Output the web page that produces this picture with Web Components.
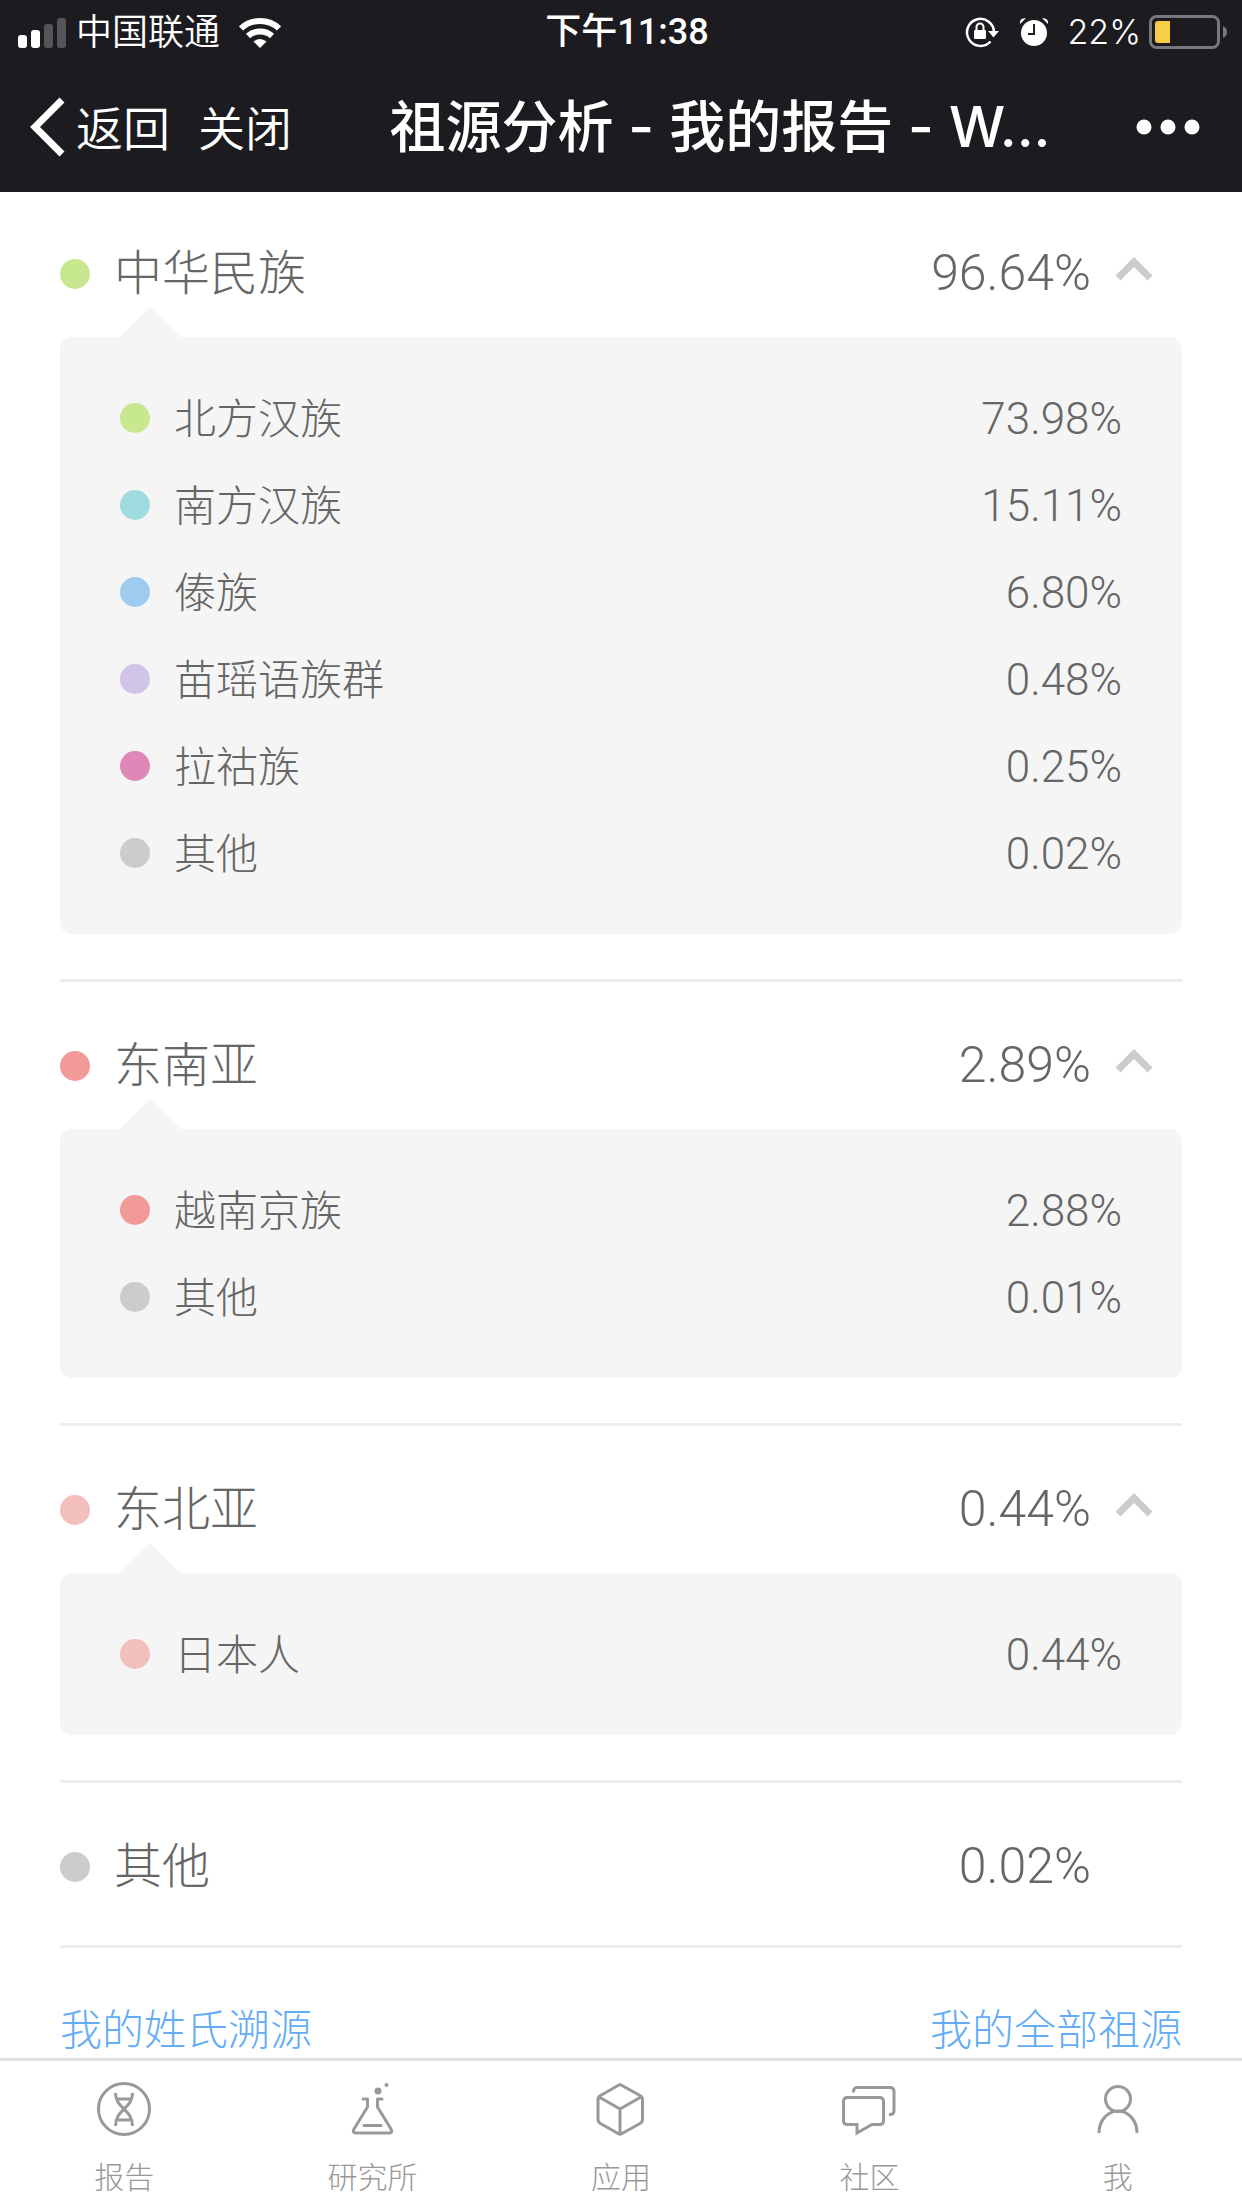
<!DOCTYPE html>
<html lang="zh-CN">
<head>
<meta charset="utf-8">
<title>祖源分析 - 我的报告</title>
<style>
html,body{margin:0;background:#fff}
body{font-family:Inter,"Noto Sans CJK SC",sans-serif;font-weight:300;color:#666}
</style>
</head>
<body>
<ancestry-app></ancestry-app>
<script>
const define=(name,html,extra)=>{
  const t=document.createElement('template');
  t.innerHTML=html;
  customElements.define(name,class extends HTMLElement{
    connectedCallback(){
      if(this.shadowRoot)return;
      this.attachShadow({mode:'open'}).append(t.content.cloneNode(true));
      if(extra)extra(this,this.shadowRoot);
    }
  });
};

define('status-bar',`<style>
:host{display:grid;grid-template-columns:1fr auto 1fr;align-items:center;height:64px;padding:0 14px 0 18px;font:350 36px/48px Inter,"Noto Sans CJK SC",sans-serif}
div{display:flex;align-items:center}
svg{display:block;flex:none}
.l{gap:9px}.l .wifi{margin-left:10px}
.t{padding-left:8px;font-weight:500;font-family:Roboto,"Noto Sans CJK SC",sans-serif}
.r{justify-content:flex-end;gap:8px}
.r .alarm{margin:0 10px}
.r span{font-size:34px}
</style>
<div class="l"><svg width="49" height="32" viewBox="0 0 49 32" fill="#fff"><rect y="19" width="9" height="13" rx="3"/><rect x="13" y="14" width="9" height="18" rx="3"/><g fill="#555459"><rect x="26" y="8" width="9" height="24" rx="3"/><rect x="39" y="2" width="9" height="30" rx="3"/></g></svg><span>中国联通</span>
<svg class="wifi" width="42" height="32" viewBox="0 0 42 32" fill="none" stroke="#fff" stroke-width="6"><path d="M2 12.500C12 2.500 30 2.500 40 12.500M9 20C15.500 14 26.500 14 33 20"/><path fill="#fff" stroke="none" d="M21 32l-6.500-6.500q6.500-5 13 0z"/></svg></div>
<span class="t">下午11:38</span>
<div class="r"><svg width="36" height="32" viewBox="0 0 36 32" fill="none" stroke="#fff" stroke-width="2.500"><path d="M25.500 25.500A13.500 13.500 0 1 1 29 16"/><path d="M23 15h11l-5.500 6.500z" fill="#fff" stroke="none"/><rect x="9" y="14" width="12" height="9" rx="1" fill="#fff" stroke="none"/><path d="M11.500 14v-3a3.500 3.500 0 0 1 7 0v3" stroke-width="2"/></svg>
<svg class="alarm" width="30" height="32" viewBox="0 0 30 32" fill="#fff"><circle cx="15" cy="17" r="13"/><path d="M1 8Q0 2 7 2zM29 8Q30 2 23 2z"/><path d="M15 8v10H9" fill="none" stroke="#1c1b20" stroke-width="2"/></svg>
<span>22%</span>
<svg width="79" height="34" viewBox="0 0 79 34"><rect x="1.500" y="1.500" width="68" height="31" rx="6" fill="none" stroke="#78777b" stroke-width="3"/><path d="M9 6h12v22H9q-3 0-3-3V9q0-3 3-3z" fill="#f8ce46"/><path d="M74 11q4 2 4 6t-4 6z" fill="#78777b"/></svg></div>`);

define('nav-bar',`<style>
:host{display:flex;align-items:center;height:128px;padding:0 42px 2px 30px;box-sizing:border-box;font:350 47px/72px Inter,"Noto Sans CJK SC",sans-serif}
button{all:unset;display:flex;align-items:center;cursor:pointer}
button svg{display:block}
button span{padding-top:4px}
.close{margin-left:28px}
h1{flex:1;min-width:0;margin:0;padding-left:12px;text-align:center;font:500 56px/72px Inter,"Noto Sans CJK SC",sans-serif;white-space:nowrap}
</style>
<button><svg width="46" height="60" viewBox="0 0 46 60" fill="none" stroke="#fff" stroke-width="7"><path d="M32 3L5 30l27 27"/></svg><span>返回</span></button>
<button class="close"><span>关闭</span></button>
<h1><slot></slot></h1>
<button aria-label="更多"><svg width="64" height="18" viewBox="0 0 64 18" fill="#fff"><circle cx="8" cy="9" r="7.500"/><circle cx="32" cy="9" r="7.500"/><circle cx="56" cy="9" r="7.500"/></svg></button>`);

define('color-dot',`<style>:host{display:block;flex:none;width:30px;height:30px;border-radius:50%;background:var(--dot)}</style>`);

define('region-item',`<style>
:host{display:flex;align-items:center;gap:24px;height:87px;font-size:42px;line-height:60px}
span{padding-top:2px}
.v{margin-left:auto;font-size:44px;font-family:Roboto,sans-serif}
</style><color-dot></color-dot><span><slot></slot></span><span class="v"></span>`,
 (h,r)=>{r.querySelector('color-dot').style.setProperty('--dot',h.getAttribute('color'));r.querySelector('.v').textContent=h.getAttribute('value')});

define('region-group',`<style>
:host{display:block;border-bottom:3px solid #eaeef2}
.head{all:unset;box-sizing:border-box;display:flex;align-items:center;width:100%;height:147px;padding:21px 30px 0 0;font-size:48px;line-height:72px;cursor:pointer}
.name{margin-left:24px;padding-bottom:2px}
.v{margin-left:auto;padding-bottom:2px;font-size:50px;font-family:Roboto,sans-serif}
svg{display:block;flex:none;width:36px;height:24px;margin:0 0 10px 25px}
.panel{position:relative;margin-bottom:45px;padding:37px 60px 38px;border-radius:12px;background:#f5f5f5}
.panel::before{content:"";position:absolute;left:60px;top:-30px;border:30px solid transparent;border-top:0;border-bottom-color:#f5f5f5}
:host([plain]) .panel,:host([plain]) path{display:none}
:host([plain]) .head{height:162px;padding-top:6px}
</style>
<button class="head"><color-dot></color-dot><span class="name"></span><span class="v"></span><svg viewBox="0 0 36 24" fill="none" stroke="#ccc" stroke-width="7"><path d="M2 21L18 5l16 16"/></svg></button>
<div class="panel"><slot></slot></div>`,
 (h,r)=>{r.querySelector('color-dot').style.setProperty('--dot',h.getAttribute('color'));r.querySelector('.name').textContent=h.getAttribute('name');r.querySelector('.v').textContent=h.getAttribute('value');if(!h.hasAttribute('plain'))r.querySelector('button').setAttribute('aria-expanded','true')});

define('tab-item',`<style>
:host{display:block;flex:1}
a{display:flex;flex-direction:column;align-items:center;gap:17px;padding-top:18px;color:#999;text-decoration:none;font-size:30px;line-height:42px}
</style><a href="#"><slot name="icon"></slot><span><slot></slot></span></a>`);

define('tab-bar',`<style>
:host{display:flex;flex:none;height:147px;border-top:3px solid #dfe3e6;background:#fff}
svg{display:block;width:60px;height:60px;fill:none;stroke:#999;stroke-width:3}
</style>
<tab-item><svg slot="icon" viewBox="0 0 60 60"><circle cx="30" cy="30" r="25.500"/><path d="M21.500 14c0 16 17 16 17 33M38.500 14c0 16-17 16-17 33M22 20h16M24 41h12"/></svg>报告</tab-item>
<tab-item><svg slot="icon" viewBox="0 0 60 60" stroke-linecap="round" stroke-linejoin="round"><path d="M20 20h4.500v8L11 50q-2 4 2 4h33q4 0 2-4L34.500 28v-8H39M21 46.500h17"/><g fill="#999" stroke="none"><circle cx="35" cy="12" r="3.500"/><circle cx="43.500" cy="6" r="2"/></g></svg>研究所</tab-item>
<tab-item><svg slot="icon" viewBox="0 0 60 60" stroke-linejoin="round"><path d="M27 6.500q2-1.500 4 0L49 16.500q2.500 1.500 2.500 4v20q0 2.500-2.500 4L31 54.500q-2 1.500-4 0L9.500 44.500Q7 43 7 40.500v-20q0-2.500 2.500-4zM8 18l21 12 21-12M29 30v25"/></svg>应用</tab-item>
<tab-item><svg slot="icon" viewBox="0 0 60 60"><path d="M8.500 18.500h32q4 0 4 4v19q0 4-4 4H33L18 54v-8.500H8.500q-4 0-4-4v-19q0-4 4-4zM14.500 13.500v-1q0-4 4-4H51q4 0 4 4v19q0 4-4 4h-1"/></svg>社区</tab-item>
<tab-item><svg slot="icon" viewBox="0 0 60 60"><circle cx="30" cy="20" r="12.500"/><path d="M11 54c0-13 9-22 19-22s19 9 19 22"/></svg>我</tab-item>`);

define('ancestry-app',`<style>
:host{display:flex;flex-direction:column;height:100vh;overflow:hidden}
header{flex:none;z-index:1;background:#1c1b20;color:#fff}
main{flex:1;min-height:0;overflow:hidden;margin-top:-2px;padding:0 60px}
.links{display:flex;justify-content:space-between;padding-top:52px;font-size:42px;line-height:60px}
.links a{color:#64adf5;text-decoration:none}
</style>
<header><status-bar></status-bar><nav-bar>祖源分析 - 我的报告 - W...</nav-bar></header>
<main>
<region-group name="中华民族" value="96.64%" color="#c8e88f">
<region-item color="#c8e88f" value="73.98%">北方汉族</region-item>
<region-item color="#a0dcdf" value="15.11%">南方汉族</region-item>
<region-item color="#9fcbef" value="6.80%">傣族</region-item>
<region-item color="#d0c4e8" value="0.48%">苗瑶语族群</region-item>
<region-item color="#df87b6" value="0.25%">拉祜族</region-item>
<region-item color="#cccccc" value="0.02%">其他</region-item>
</region-group>
<region-group name="东南亚" value="2.89%" color="#f29a98">
<region-item color="#f29a98" value="2.88%">越南京族</region-item>
<region-item color="#cccccc" value="0.01%">其他</region-item>
</region-group>
<region-group name="东北亚" value="0.44%" color="#f2bfbc">
<region-item color="#f2bfbc" value="0.44%">日本人</region-item>
</region-group>
<region-group plain name="其他" value="0.02%" color="#cccccc"></region-group>
<div class="links"><a href="#">我的姓氏溯源</a><a href="#">我的全部祖源</a></div>
</main>
<tab-bar></tab-bar>`);
</script>
</body>
</html>
